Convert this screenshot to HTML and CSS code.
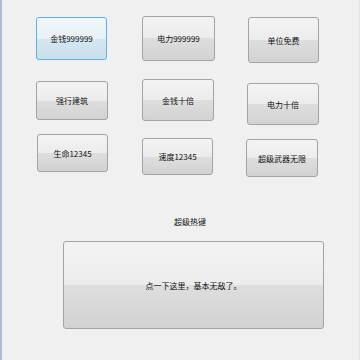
FILE: index.html
```html
<!DOCTYPE html>
<html lang="zh-CN">
<head>
    <meta charset="UTF-8">
    <meta name="viewport" content="width=device-width, initial-scale=1.0">
    <title>修改器</title>
    <link rel="stylesheet" href="styles.css">
</head>
<body>
    <div id="window">
        <div class="cheat-grid">
            <button class="cheat-button focused b1">金钱999999</button>
            <button class="cheat-button b2">电力999999</button>
            <button class="cheat-button b3">单位免费</button>
            <button class="cheat-button b4">强行建筑</button>
            <button class="cheat-button b5">金钱十倍</button>
            <button class="cheat-button b6">电力十倍</button>
            <button class="cheat-button b7">生命12345</button>
            <button class="cheat-button b8">速度12345</button>
            <button class="cheat-button b9">超级武器无限</button>
        </div>

        <p class="hotkey-label">超级热键</p>
        <button class="cheat-button big-button">点一下这里，基本无敌了。</button>
    </div>
</body>
</html>
```
FILE: styles.css
```css
html, body {
    margin: 0;
    height: 100%;
}

body {
    background-color: #f0f0f0;
    font-family: "Noto Sans CJK SC", "Noto Sans", sans-serif;
    color: #111;
}

#window {
    height: 100%;
    box-sizing: border-box;
    border-left: 2px solid #a9bcd6;
    border-right: 1px solid #e4e4e4;
    display: flex;
    flex-direction: column;
}

.cheat-grid {
    display: grid;
    grid-template-columns: 106px 105px 80px;
    grid-template-rows: 63px 55px 50px;
    padding: 16px 0 0 34px;
    align-items: start;
}

.cheat-button {
    font-family: inherit;
    font-size: 8px;
    color: #111;
    padding: 0;
    border: 1px solid #a3a3a3;
    border-radius: 3px;
    background: linear-gradient(to bottom, #f3f3f3 0%, #ececec 50%, #dedede 50%, #d2d2d2 100%);
    cursor: pointer;
}

.cheat-button.focused {
    border-color: #5cb3e2;
    background: linear-gradient(to bottom, #f0f6f9 0%, #e8f1f6 50%, #d6e7f1 50%, #c9deea 100%);
}

.b1 { width: 71px; height: 43px; margin-top: 1px; }
.b2 { width: 73px; height: 45px; }
.b3 { width: 71px; height: 46px; margin-top: 1px; margin-left: 1px; }
.b4 { width: 72px; height: 39px; margin-top: 2px; }
.b5 { width: 72px; height: 42px; }
.b6 { width: 72px; height: 42px; margin-top: 4px; }
.b7 { width: 71px; height: 38px; margin-left: 1px; }
.b8 { width: 71px; height: 37px; margin-top: 4px; }
.b9 { width: 72px; height: 38px; margin-top: 5px; margin-left: -1px; }

.hotkey-label {
    margin: 32px 0 0 0;
    padding-left: 172px;
    font-size: 8px;
    line-height: 12px;
}

.big-button {
    align-self: flex-start;
    margin: 13px 0 0 61px;
    width: 261px;
    height: 88px;
}
```
